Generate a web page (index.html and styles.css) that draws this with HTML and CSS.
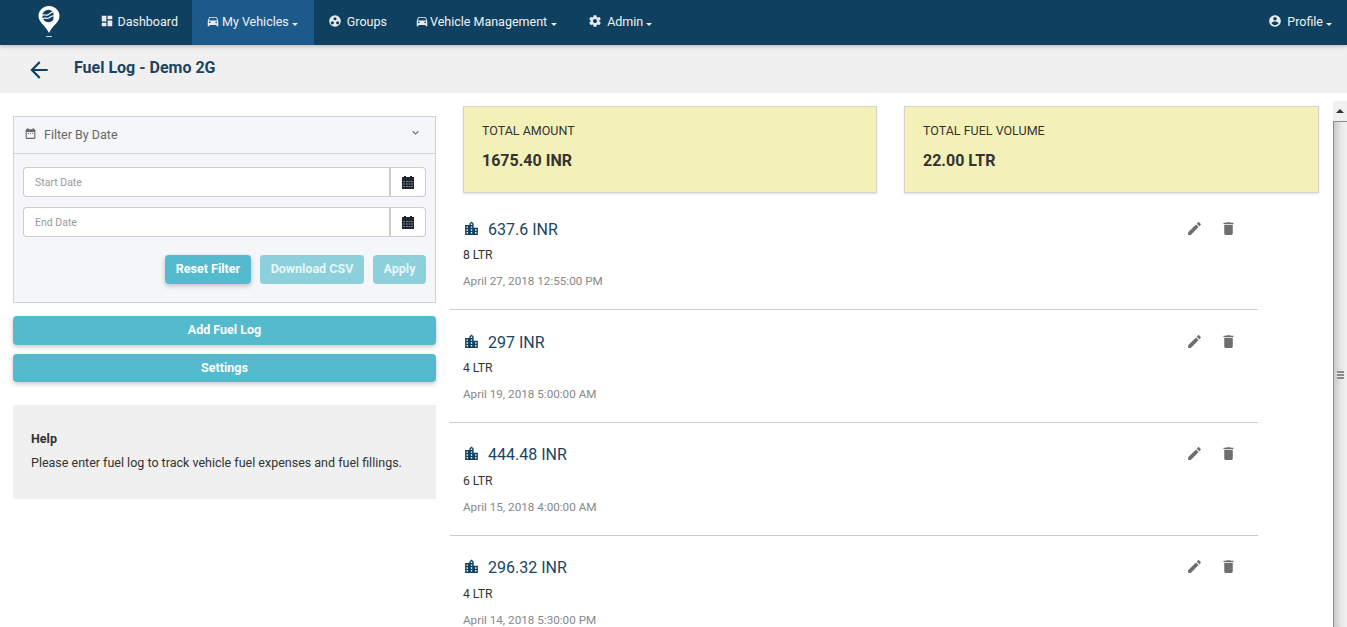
FILE: index.html
```html
<!DOCTYPE html>
<html lang="en">
<head>
<meta charset="utf-8">
<title>Fuel Log - Demo 2G</title>
<link rel="stylesheet" href="styles.css">
</head>
<body>
<header class="topnav">
  <a class="logo" href="#" aria-label="Home">
    <svg width="24" height="38" viewBox="0 0 24 38">
      <path fill="#fff" d="M12 6C6.200 6 1.500 10.500 1.500 16c0 6.500 6.800 9 10.500 17 3.700-8 10.500-10.500 10.500-17C22.500 10.500 17.800 6 12 6z"/>
      <circle cx="11.500" cy="16" r="6.200" fill="#10405f"/>
      <path fill="none" stroke="#fff" stroke-width="1.200" d="M4.500 15.500c2.500-1.800 4.500.6 6.800-.8 2-1.200 2.400-2.900 6.700-3M5.500 18.500c2.500-1.200 4.200.6 6.300-.6 1.800-1.100 2.500-2.200 6.200-2.200"/>
      <path fill="#fff" d="M16.500 9.500h3v13h-3z"/>
      <rect x="9" y="36" width="6" height="1" fill="#c9d3da"/>
    </svg>
  </a>
  <nav class="menu">
    <a class="menu-item" href="#">
      <svg class="ni" viewBox="0 0 24 24"><path d="M3 13h8V3H3v10zm0 8h8v-6H3v6zm10 0h8V11h-8v10zm0-18v6h8V3h-8z"/></svg>
      <span class="ml-4">Dashboard</span>
    </a>
    <a class="menu-item active" href="#">
      <svg class="ni" viewBox="0 0 24 24"><path d="M18.920 6.010C18.720 5.420 18.160 5 17.500 5h-11c-.66 0-1.210.42-1.420 1.010L3 12v8c0 .55.45 1 1 1h1c.55 0 1-.45 1-1v-1h12v1c0 .55.45 1 1 1h1c.55 0 1-.45 1-1v-8l-2.080-5.990zM6.500 16c-.83 0-1.500-.67-1.500-1.500S5.670 13 6.500 13s1.500.67 1.500 1.500S7.330 16 6.500 16zm11 0c-.83 0-1.500-.67-1.500-1.500s.67-1.500 1.500-1.500 1.500.67 1.500 1.500-.67 1.500-1.500 1.500zM5 11l1.500-4.500h11L19 11H5z"/></svg>
      <span class="ml-2">My Vehicles</span><i class="caret"></i>
    </a>
    <a class="menu-item" href="#">
      <svg class="ni" viewBox="0 0 24 24"><path fill-rule="evenodd" d="M12 2a10 10 0 1 0 0 20 10 10 0 0 0 0-20zM12 5.500a2.700 2.700 0 1 1 0 5.400 2.700 2.700 0 0 1 0-5.400zM7.500 12.500a2.700 2.700 0 1 1 0 5.400 2.700 2.700 0 0 1 0-5.400zM16.500 12.500a2.700 2.700 0 1 1 0 5.400 2.700 2.700 0 0 1 0-5.400z"/></svg>
      <span class="ml-5">Groups</span>
    </a>
    <a class="menu-item" href="#">
      <svg class="ni" viewBox="0 0 24 24"><path d="M18.920 6.010C18.720 5.420 18.160 5 17.500 5h-11c-.66 0-1.210.42-1.420 1.010L3 12v8c0 .55.45 1 1 1h1c.55 0 1-.45 1-1v-1h12v1c0 .55.45 1 1 1h1c.55 0 1-.45 1-1v-8l-2.080-5.990zM6.500 16c-.83 0-1.500-.67-1.500-1.500S5.670 13 6.500 13s1.500.67 1.500 1.500S7.330 16 6.500 16zm11 0c-.83 0-1.500-.67-1.500-1.500s.67-1.500 1.500-1.500 1.500.67 1.500 1.500-.67 1.500-1.500 1.500zM5 11l1.500-4.500h11L19 11H5z"/></svg>
      <span class="ml-1">Vehicle Management</span><i class="caret caret-wide"></i>
    </a>
    <a class="menu-item" href="#">
      <svg class="ni" viewBox="0 0 24 24"><path d="M19.430 12.980c.04-.32.07-.64.07-.98s-.03-.66-.07-.98l2.110-1.650c.19-.15.24-.42.12-.64l-2-3.460c-.12-.22-.39-.3-.61-.22l-2.490 1c-.52-.4-1.080-.73-1.690-.98l-.38-2.650C14.460 2.180 14.250 2 14 2h-4c-.25 0-.46.18-.49.42l-.38 2.650c-.61.25-1.170.59-1.690.98l-2.490-1c-.23-.09-.49 0-.61.22l-2 3.460c-.13.22-.07.49.12.64l2.110 1.650c-.04.32-.07.65-.07.98s.03.66.07.98l-2.110 1.650c-.19.15-.24.42-.12.64l2 3.460c.12.22.39.3.61.22l2.490-1c.52.4 1.080.73 1.690.98l.38 2.650c.03.24.24.42.49.42h4c.25 0 .46-.18.49-.42l.38-2.650c.61-.25 1.170-.59 1.690-.98l2.490 1c.23.09.49 0 .61-.22l2-3.460c.12-.22.07-.49-.12-.64l-2.110-1.650zM12 15.500c-1.930 0-3.500-1.570-3.500-3.500s1.570-3.500 3.500-3.500 3.500 1.570 3.500 3.500-1.570 3.500-3.500 3.500z"/></svg>
      <span class="ml-5">Admin</span><i class="caret"></i>
    </a>
  </nav>
  <a class="profile" href="#">
    <svg class="ni" viewBox="0 0 24 24"><path d="M12 2C6.480 2 2 6.480 2 12s4.480 10 10 10 10-4.480 10-10S17.520 2 12 2zm0 3c1.660 0 3 1.340 3 3s-1.340 3-3 3-3-1.340-3-3 1.340-3 3-3zm0 14.200c-2.500 0-4.710-1.280-6-3.220.03-1.990 4-3.080 6-3.080 1.990 0 5.970 1.090 6 3.080-1.290 1.940-3.500 3.220-6 3.220z"/></svg>
    <span class="ml-5">Profile</span><i class="caret"></i>
  </a>
</header>

<div class="subhead">
  <svg class="back" viewBox="0 0 24 24"><path d="M20 11H7.830l5.590-5.590L12 4l-8 8 8 8 1.410-1.410L7.830 13H20v-2z"/></svg>
  <h1 class="page-title">Fuel Log - Demo 2G</h1>
</div>

<main class="content">
  <aside class="side">
    <section class="filter">
      <div class="filter-head">
        <svg class="fh-icon" viewBox="0 0 24 24"><path d="M9 11H7v2h2v-2zm4 0h-2v2h2v-2zm4 0h-2v2h2v-2zm2-7h-1V2h-2v2H8V2H6v2H5c-1.110 0-1.990.9-1.990 2L3 20c0 1.100.89 2 2 2h14c1.100 0 2-.9 2-2V6c0-1.100-.9-2-2-2zm0 16H5V9h14v11z"/></svg>
        <span class="fh-title">Filter By Date</span>
        <svg class="fh-chev" viewBox="0 0 24 24"><path d="M16.590 8.590L12 13.170 7.410 8.590 6 10l6 6 6-6z"/></svg>
      </div>
      <div class="filter-body">
        <div class="date-field">
          <input class="date-input" type="text" placeholder="Start Date">
          <span class="date-btn"><svg class="cal" viewBox="0 0 12 13"><path d="M2 0h2v1h4V0h2v1h2v12H0V1h2z"/><path class="cal-grid" d="M1 5h2v1H1zm3 0h2v1H4zm2.500 0h2v1h-2zM9 5h2v1H9zM1 7.500h2v1H1zm3 0h2v1H4zm2.500 0h2v1h-2zM9 7.500h2v1H9zM1 10h2v1H1zm3 0h2v1H4zm2.500 0h2v1h-2zM9 10h2v1H9z"/></svg></span>
        </div>
        <div class="date-field">
          <input class="date-input" type="text" placeholder="End Date">
          <span class="date-btn"><svg class="cal" viewBox="0 0 12 13"><path d="M2 0h2v1h4V0h2v1h2v12H0V1h2z"/><path class="cal-grid" d="M1 5h2v1H1zm3 0h2v1H4zm2.500 0h2v1h-2zM9 5h2v1H9zM1 7.500h2v1H1zm3 0h2v1H4zm2.500 0h2v1h-2zM9 7.500h2v1H9zM1 10h2v1H1zm3 0h2v1H4zm2.500 0h2v1h-2zM9 10h2v1H9z"/></svg></span>
        </div>
        <div class="filter-actions">
          <button class="btn raised btn-reset" type="button">Reset Filter</button>
          <button class="btn faded btn-csv" type="button">Download CSV</button>
          <button class="btn faded btn-apply" type="button">Apply</button>
        </div>
      </div>
    </section>
    <button class="btn raised wide add" type="button">Add Fuel Log</button>
    <button class="btn raised wide settings" type="button">Settings</button>
    <section class="help">
      <h2 class="help-title">Help</h2>
      <p class="help-text">Please enter fuel log to track vehicle fuel expenses and fuel fillings.</p>
    </section>
  </aside>

  <section class="records">
    <div class="totals">
      <div class="total-card">
        <div class="total-label">TOTAL AMOUNT</div>
        <div class="total-value">1675.40 INR</div>
      </div>
      <div class="total-card">
        <div class="total-label">TOTAL FUEL VOLUME</div>
        <div class="total-value">22.00 LTR</div>
      </div>
    </div>
    <ul class="log-list">
      <li class="log">
        <div class="log-main">
          <div class="log-amount"><svg class="city" viewBox="0 0 24 24"><path d="M15 11V5l-3-3-3 3v2H3v14h18V11h-6zm-8 8H5v-2h2v2zm0-4H5v-2h2v2zm0-4H5V9h2v2zm6 8h-2v-2h2v2zm0-4h-2v-2h2v2zm0-4h-2V9h2v2zm0-4h-2V5h2v2zm6 12h-2v-2h2v2zm0-4h-2v-2h2v2z"/></svg><span>637.6 INR</span></div>
          <div class="log-vol">8 LTR</div>
          <div class="log-date">April 27, 2018 12:55:00 PM</div>
        </div>
        <div class="log-actions">
          <svg class="act" viewBox="0 0 24 24"><path d="M3 17.250V21h3.750L17.810 9.940l-3.750-3.750L3 17.250zM20.710 7.040c.39-.39.39-1.020 0-1.410l-2.340-2.340c-.39-.39-1.020-.39-1.410 0l-1.830 1.830 3.750 3.750 1.830-1.830z"/></svg>
          <svg class="act" viewBox="0 0 24 24"><path d="M6 19c0 1.100.9 2 2 2h8c1.100 0 2-.9 2-2V7H6v12zM19 4h-3.500l-1-1h-5l-1 1H5v2h14V4z"/></svg>
        </div>
      </li>
      <li class="log">
        <div class="log-main">
          <div class="log-amount"><svg class="city" viewBox="0 0 24 24"><path d="M15 11V5l-3-3-3 3v2H3v14h18V11h-6zm-8 8H5v-2h2v2zm0-4H5v-2h2v2zm0-4H5V9h2v2zm6 8h-2v-2h2v2zm0-4h-2v-2h2v2zm0-4h-2V9h2v2zm0-4h-2V5h2v2zm6 12h-2v-2h2v2zm0-4h-2v-2h2v2z"/></svg><span>297 INR</span></div>
          <div class="log-vol">4 LTR</div>
          <div class="log-date">April 19, 2018 5:00:00 AM</div>
        </div>
        <div class="log-actions">
          <svg class="act" viewBox="0 0 24 24"><path d="M3 17.250V21h3.750L17.810 9.940l-3.750-3.750L3 17.250zM20.710 7.040c.39-.39.39-1.020 0-1.410l-2.340-2.340c-.39-.39-1.020-.39-1.410 0l-1.830 1.830 3.750 3.750 1.830-1.830z"/></svg>
          <svg class="act" viewBox="0 0 24 24"><path d="M6 19c0 1.100.9 2 2 2h8c1.100 0 2-.9 2-2V7H6v12zM19 4h-3.500l-1-1h-5l-1 1H5v2h14V4z"/></svg>
        </div>
      </li>
      <li class="log log-up">
        <div class="log-main">
          <div class="log-amount"><svg class="city" viewBox="0 0 24 24"><path d="M15 11V5l-3-3-3 3v2H3v14h18V11h-6zm-8 8H5v-2h2v2zm0-4H5v-2h2v2zm0-4H5V9h2v2zm6 8h-2v-2h2v2zm0-4h-2v-2h2v2zm0-4h-2V9h2v2zm0-4h-2V5h2v2zm6 12h-2v-2h2v2zm0-4h-2v-2h2v2z"/></svg><span>444.48 INR</span></div>
          <div class="log-vol">6 LTR</div>
          <div class="log-date">April 15, 2018 4:00:00 AM</div>
        </div>
        <div class="log-actions">
          <svg class="act" viewBox="0 0 24 24"><path d="M3 17.250V21h3.750L17.810 9.940l-3.750-3.750L3 17.250zM20.710 7.040c.39-.39.39-1.020 0-1.410l-2.340-2.340c-.39-.39-1.020-.39-1.410 0l-1.830 1.830 3.750 3.750 1.830-1.830z"/></svg>
          <svg class="act" viewBox="0 0 24 24"><path d="M6 19c0 1.100.9 2 2 2h8c1.100 0 2-.9 2-2V7H6v12zM19 4h-3.500l-1-1h-5l-1 1H5v2h14V4z"/></svg>
        </div>
      </li>
      <li class="log log-up">
        <div class="log-main">
          <div class="log-amount"><svg class="city" viewBox="0 0 24 24"><path d="M15 11V5l-3-3-3 3v2H3v14h18V11h-6zm-8 8H5v-2h2v2zm0-4H5v-2h2v2zm0-4H5V9h2v2zm6 8h-2v-2h2v2zm0-4h-2v-2h2v2zm0-4h-2V9h2v2zm0-4h-2V5h2v2zm6 12h-2v-2h2v2zm0-4h-2v-2h2v2z"/></svg><span>296.32 INR</span></div>
          <div class="log-vol">4 LTR</div>
          <div class="log-date">April 14, 2018 5:30:00 PM</div>
        </div>
        <div class="log-actions">
          <svg class="act" viewBox="0 0 24 24"><path d="M3 17.250V21h3.750L17.810 9.940l-3.750-3.750L3 17.250zM20.710 7.040c.39-.39.39-1.020 0-1.410l-2.340-2.340c-.39-.39-1.020-.39-1.410 0l-1.830 1.830 3.750 3.750 1.830-1.830z"/></svg>
          <svg class="act" viewBox="0 0 24 24"><path d="M6 19c0 1.100.9 2 2 2h8c1.100 0 2-.9 2-2V7H6v12zM19 4h-3.500l-1-1h-5l-1 1H5v2h14V4z"/></svg>
        </div>
      </li>
    </ul>
  </section>

  <div class="scrollbar" aria-hidden="true">
    <div class="sb-up"><i class="sb-arrow"></i></div>
    <div class="sb-thumb"><i class="sb-grip"></i></div>
  </div>
</main>
</body>
</html>
```
FILE: styles.css
```css
* { box-sizing: border-box; }
html, body { height: 100%; }
body {
  margin: 0;
  overflow: hidden;
  background: #fff;
  color: #333;
  font-family: Roboto, "Liberation Sans", sans-serif;
  font-size: 12.500px;
}
a { color: inherit; text-decoration: none; }

.topnav {
  position: relative;
  z-index: 2;
  display: flex;
  align-items: center;
  height: 45px;
  padding-left: 37px;
  padding-right: 15px;
  background: #10405f;
  color: #fff;
  box-shadow: 0 1px 4px rgba(0, 0, 0, .25);
}
.logo { display: flex; width: 48.500px; height: 38px; margin-top: -7px; }
.menu { display: flex; height: 100%; flex: 1; }
.menu-item {
  display: flex;
  align-items: center;
  height: 100%;
  padding: 0 14px 2px;
  font-size: 12.500px;
  color: #eef2f5;
}
.menu-item.active { background: #1b5a8a; }
.profile { display: flex; align-items: center; height: 100%; padding-bottom: 2px; color: #eef2f5; }
.ni { width: 14px; height: 14px; fill: #e6ebef; flex: none; margin-top: -1px; }
.ml-1 { margin-left: 1px; }
.ml-2 { margin-left: 2px; }
.ml-4 { margin-left: 4px; }
.ml-5 { margin-left: 5px; }
.caret {
  width: 0;
  height: 0;
  margin-left: 3px;
  margin-right: 2px;
  margin-top: 5px;
  border-top: 3px solid #e6ebef;
  border-left: 3px solid transparent;
  border-right: 3px solid transparent;
}
.caret-wide { margin-left: 4px; margin-right: 3px; }
.profile .caret { margin-right: 0; }

.subhead {
  display: flex;
  align-items: center;
  height: 48px;
  padding-left: 26px;
  background: #f0f0f0;
}
.back { width: 26px; height: 26px; fill: #10405f; flex: none; margin-top: 2px; }
.page-title {
  margin: 0 0 3px 22px;
  font-size: 16px;
  font-weight: 700;
  color: #1b4462;
}

.content { display: flex; align-items: flex-start; height: 534px; }

.side { width: 423px; margin: 23px 14px 0 13px; flex: none; }
.filter { border: 1px solid #ccd3d9; background: #f4f6fa; height: 187px; }
.filter-head {
  display: flex;
  align-items: center;
  height: 37px;
  padding: 0 10px 2px;
  border-bottom: 1px solid #ccd3d9;
  color: #666;
}
.fh-icon { width: 13px; height: 13px; fill: #666; flex: none; margin-top: -1px; }
.fh-title { margin-left: 7px; flex: 1; }
.fh-chev { width: 13px; height: 13px; fill: #666; margin-top: -4px; margin-right: 3px; }
.filter-body { padding: 13px 9px 0; }
.date-field { display: flex; height: 30px; margin-bottom: 10px; }
.date-input {
  flex: 1;
  min-width: 0;
  height: 30px;
  padding: 0 11px;
  border: 1px solid #ccc;
  border-right-width: 2px;
  border-radius: 4px 0 0 4px;
  background: #fff;
  font: 10.500px Roboto, "Liberation Sans", sans-serif;
  color: #333;
  outline: none;
}
.date-input::placeholder { color: #999; opacity: 1; }
.date-btn {
  display: flex;
  align-items: center;
  justify-content: center;
  width: 35px;
  border: 1px solid #ccc;
  border-left: 0;
  border-radius: 0 4px 4px 0;
  background: #fff;
}
.cal { width: 12px; height: 13px; fill: #20262b; }
.cal .cal-grid { fill: #6f7d8c; }
.filter-actions { display: flex; justify-content: flex-end; gap: 9px; margin-top: 18px; }

.btn {
  height: 29px;
  padding: 0 0 2px;
  border: 0;
  border-radius: 4px;
  background: #54bacd;
  color: #fff;
  font: 700 12.500px Roboto, "Liberation Sans", sans-serif;
}
.btn.raised { box-shadow: 0 2px 5px rgba(0, 0, 0, .22); }
.btn.faded { background: #8bd0db; color: #e8f6f8; }
.btn.wide { display: block; width: 100%; }
.btn-reset { width: 86px; }
.btn-csv { width: 104px; }
.btn-apply { width: 53px; }
.add { margin-top: 13px; }
.settings { margin-top: 9px; height: 28px; }

.help { height: 94px; margin-top: 23px; padding: 26px 18px 0; background: #f0f0f0; }
.help-title { margin: 0 0 9px; font-size: 12.500px; font-weight: 700; color: #333; line-height: 15px; }
.help-text { margin: 0; font-size: 12.500px; line-height: 16px; color: #333; }

.records { width: 808px; flex: none; padding-top: 13px; }
.totals { display: grid; grid-template-columns: 414px 415px; column-gap: 27px; width: 869px; padding-left: 13px; }
.total-card {
  height: 87px;
  padding: 16px 18px 0;
  border: 1px solid #d4d4cc;
  background: #f4f1b8;
  box-shadow: 0 1px 2px rgba(0, 0, 0, .12);
}
.total-label { font-size: 12.500px; line-height: 15px; color: #333; }
.total-value { margin-top: 13px; font-size: 16px; font-weight: 700; line-height: 19px; color: #333; }

.log-list { list-style: none; margin: 4px 0 0; padding: 0; }
.log {
  display: flex;
  justify-content: space-between;
  height: 113px;
  padding: 22px 13px 0;
  border-bottom: 1px solid #ccc;
}
.log:last-child { border-bottom: 0; }
.log-amount { display: flex; align-items: center; height: 20px; font-size: 16px; color: #1b4462; }
.city { width: 17px; height: 17px; fill: #10405f; margin-top: -2px; margin-right: 8px; flex: none; }
.log-vol { margin-top: 9px; font-size: 12.200px; line-height: 15px; color: #333; }
.log-date { margin-top: 11px; font-size: 11.700px; line-height: 15px; color: #888; }
.log-up { padding-top: 21px; }
.log-up .log-vol { margin-top: 10px; }
.log-actions { display: flex; gap: 17px; padding-top: 1px; padding-right: 8px; }
.act { width: 17px; height: 17px; fill: #6e6e6e; }

.scrollbar {
  width: 14px;
  margin-left: 75px;
  margin-top: 8px;
  flex: none;
  display: flex;
  flex-direction: column;
  height: 526px;
  background: #f4f4f4;
}
.sb-up { display: flex; align-items: center; justify-content: center; height: 20px; background: #f1f1f1; }
.sb-arrow {
  width: 0;
  height: 0;
  border-bottom: 4px solid #333;
  border-left: 4px solid transparent;
  border-right: 4px solid transparent;
}
.sb-thumb {
  flex: 1;
  display: flex;
  align-items: center;
  justify-content: center;
  border: 1px solid #8c8c8c;
  border-right: 0;
  border-bottom: 0;
  background: linear-gradient(90deg, #c9c9c9, #dcdcdc 35%, #e9e9e9 60%, #f2f2f2);
}
.sb-grip {
  width: 7px;
  height: 8px;
  background: repeating-linear-gradient(180deg, #8a8a8a 0 2px, #eee 2px 3px);
}
```
